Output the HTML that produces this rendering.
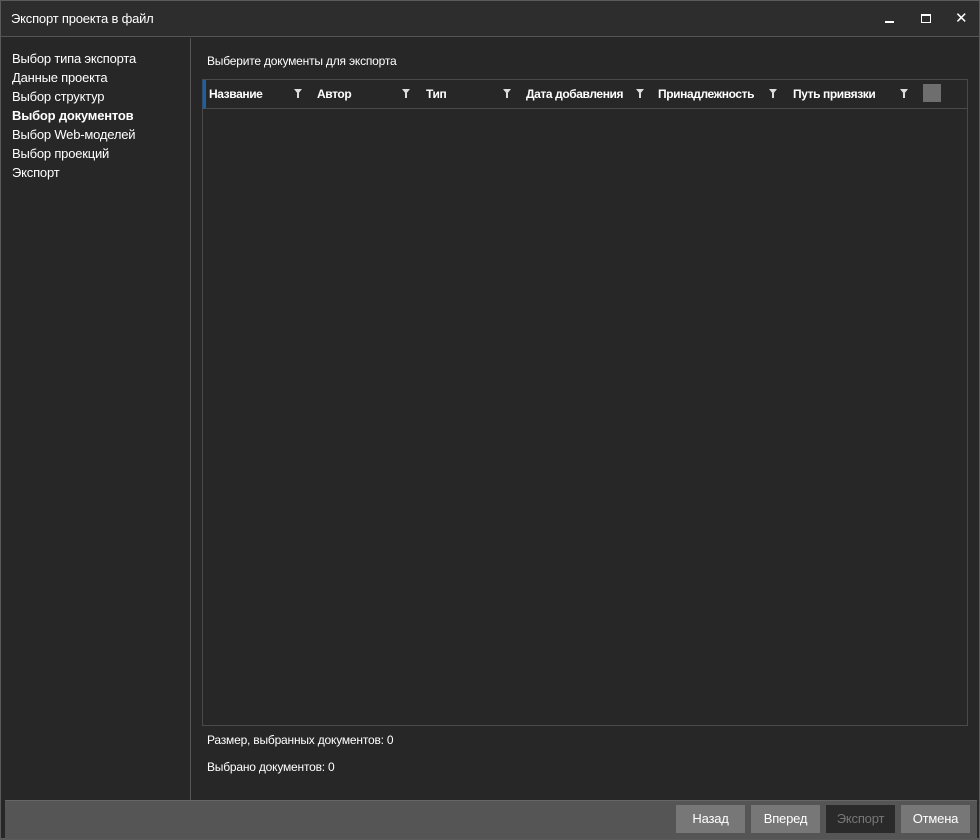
<!DOCTYPE html>
<html><head><meta charset="utf-8"><style>
*{box-sizing:border-box;margin:0;padding:0}
body{width:980px;height:840px;background:#5a5a5a;font-family:"Segoe UI","Liberation Sans","DejaVu Sans",sans-serif;color:#fff;position:relative;overflow:hidden}
.win{position:absolute;left:1px;top:1px;width:978px;height:837px;background:#272727}
.title{position:absolute;left:0;top:0;width:978px;height:36px;background:#2d2d2d;border-bottom:1px solid #555;font-size:13px;line-height:36px;padding-left:10px;letter-spacing:-0.2px}
.left{position:absolute;left:0;top:37px;width:190px;height:762px;border-right:1px solid #555;padding-top:11px}
.left div{font-size:13px;line-height:19px;padding-left:11px;letter-spacing:-0.2px}
.lbl{position:absolute;font-size:12px;letter-spacing:-0.2px}
.grid{position:absolute;left:201px;top:78px;width:766px;height:647px;border:1px solid #4a4a4a}
.hdr{position:absolute;left:0;top:0;width:764px;height:29px;border-bottom:1px solid #4a4a4a;border-left:3px solid #1e5fa0}
.h{position:absolute;top:7px;font-size:12px;font-weight:bold;letter-spacing:-0.4px}
.f{position:absolute;top:9px;width:0;height:0;border-left:4px solid transparent;border-right:4px solid transparent;border-top:5px solid #ddd}
.f:after{content:"";position:absolute;left:-1px;top:-1px;width:2px;height:5px;background:#ddd}
.bottom{position:absolute;left:4px;top:799px;width:972px;height:39px;background:#555;border-top:1px solid #666}
.btn{position:absolute;top:805px;height:28px;width:69px;background:#777;font-size:13px;text-align:center;line-height:28px;letter-spacing:-0.2px}
</style></head><body>
<div class="win">
<div class="title">Экспорт проекта в файл
<div style="position:absolute;left:884px;top:20px;width:9px;height:2px;background:#fff"></div>
<div style="position:absolute;left:920px;top:13px;width:10px;height:9px;border:1px solid #fff;border-top-width:2px"></div>
<div style="position:absolute;left:954px;top:0;font-size:15px;line-height:36px">✕</div>
</div>
<div class="left">
<div>Выбор типа экспорта</div><div>Данные проекта</div><div>Выбор структур</div>
<div style="font-weight:bold">Выбор документов</div><div>Выбор Web-моделей</div><div>Выбор проекций</div><div>Экспорт</div>
</div>
<div class="lbl" style="left:206px;top:53px">Выберите документы для экспорта</div>
<div class="grid"><div class="hdr">
<span class="h" style="left:3px">Название</span><span class="f" style="left:88px"></span>
<span class="h" style="left:111px">Автор</span><span class="f" style="left:196px"></span>
<span class="h" style="left:220px">Тип</span><span class="f" style="left:297px"></span>
<span class="h" style="left:320px">Дата добавления</span><span class="f" style="left:430px"></span>
<span class="h" style="left:452px">Принадлежность</span><span class="f" style="left:563px"></span>
<span class="h" style="left:587px">Путь привязки</span><span class="f" style="left:694px"></span>
<span style="position:absolute;left:717px;top:4px;width:18px;height:18px;background:#6e6e6e"></span>
</div></div>
<div class="lbl" style="left:206px;top:732px">Размер, выбранных документов: 0</div>
<div class="lbl" style="left:206px;top:759px">Выбрано документов: 0</div>
<div class="bottom"></div>
</div>
<div class="btn" style="left:676px">Назад</div>
<div class="btn" style="left:751px">Вперед</div>
<div class="btn" style="left:826px;background:#2a2a2a;color:#777">Экспорт</div>
<div class="btn" style="left:901px">Отмена</div>
</body></html>
